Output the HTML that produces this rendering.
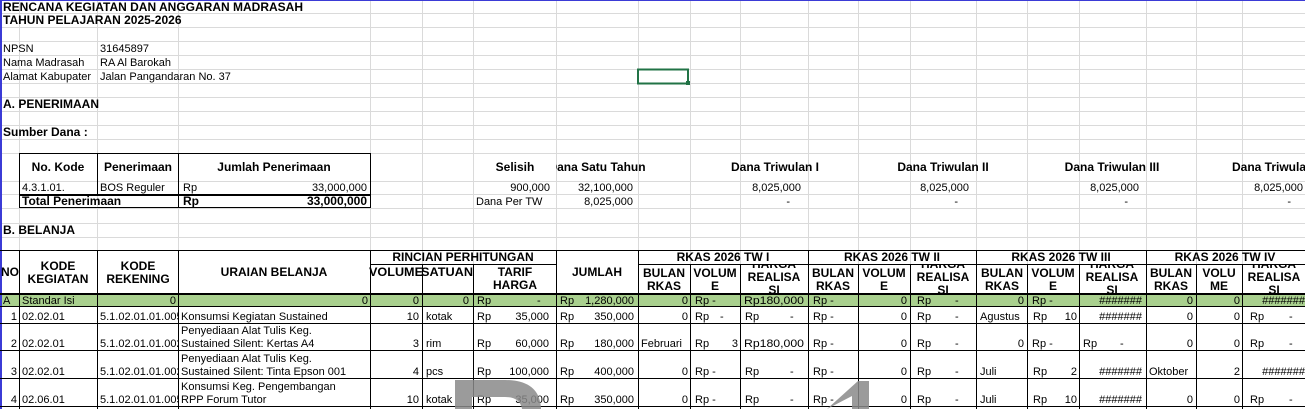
<!DOCTYPE html>
<html><head><meta charset="utf-8"><style>
html,body{margin:0;padding:0;background:#fff;width:1305px;height:409px;overflow:hidden}
svg{display:block}
text{font-family:"Liberation Sans",Arial,sans-serif;font-size:11px;fill:#000}
.b{font-weight:bold;font-size:12px}
.m{text-anchor:middle}
.e{text-anchor:end}
</style></head><body>
<svg width="1305" height="409" viewBox="0 0 1305 409" xmlns="http://www.w3.org/2000/svg">
<defs>
<clipPath id="cNo"><rect x="0" y="250" width="19" height="44"/></clipPath>
<clipPath id="cRek"><rect x="97" y="300" width="81" height="109"/></clipPath>
<clipPath id="cDana"><rect x="556" y="153" width="749" height="28"/></clipPath>
<clipPath id="cHdr"><rect x="0" y="264" width="1305" height="30"/></clipPath>
</defs>
<rect x="0" y="294" width="1305" height="12" fill="#a9d08e"/>
<g stroke="#dadada" stroke-width="1">
<path d="M19.5 0V409M97.5 0V409M178.5 0V409M370.5 0V409M422.5 0V409M473.5 0V409M556.5 0V409M638.5 0V409M690.5 0V409M740.5 0V409M808.5 0V409M858.5 0V409M910.5 0V409M976.5 0V409M1027.5 0V409M1079.5 0V409M1146.5 0V409M1196.5 0V409M1242.5 0V409"/>
<path d="M0 13.5H1305M0 27.5H1305M0 41.5H1305M0 55.5H1305M0 69.5H1305M0 83.5H1305M0 97.5H1305M0 111.5H1305M0 125.5H1305M0 139.5H1305M0 153.5H1305M0 181.5H1305M0 194.5H1305M0 208.5H1305M0 223.5H1305M0 237.5H1305"/>
</g>
<rect x="0" y="0" width="2" height="409" fill="#3b3bd6"/>
<rect x="0" y="0" width="1305" height="1" fill="#3b3bd6"/>
<rect x="638" y="69.5" width="50" height="14" fill="none" stroke="#217346" stroke-width="2"/>
<rect x="686" y="81" width="4" height="4" fill="#217346"/>

<text x="3" y="11" class="b">RENCANA KEGIATAN DAN ANGGARAN MADRASAH</text>
<text x="3" y="24" class="b">TAHUN PELAJARAN 2025-2026</text>
<text x="3" y="52">NPSN</text><text x="100" y="52">31645897</text>
<text x="3" y="66">Nama Madrasah</text><text x="100" y="66">RA Al Barokah</text>
<text x="3" y="80">Alamat Kabupater</text><text x="100" y="80">Jalan Pangandaran No. 37</text>
<text x="3" y="108" class="b">A. PENERIMAAN</text>
<text x="3" y="136" class="b">Sumber Dana :</text>

<g stroke="#000" stroke-width="1" fill="none">
<rect x="19.5" y="153.5" width="351" height="54"/>
<path d="M97.5 153.5V194.5M178.5 153.5V208M19.5 194.5H370.5"/>
<path d="M19.5 195.5H370.5M19.5 207.5H370.5"/>
</g>
<text x="58" y="171" class="b m">No. Kode</text>
<text x="138" y="171" class="b m">Penerimaan</text>
<text x="274" y="171" class="b m">Jumlah Penerimaan</text>
<text x="22" y="191">4.3.1.01.</text><text x="100" y="191">BOS Reguler</text>
<text x="183" y="191">Rp</text><text x="367" y="191" class="e">33,000,000</text>
<text x="22" y="205" class="b">Total Penerimaan</text>
<text x="183" y="205" class="b">Rp</text><text x="367" y="205" class="b e">33,000,000</text>

<text x="515" y="171" class="b m">Selisih</text>
<g clip-path="url(#cDana)"><text x="597" y="171" class="b m">Dana Satu Tahun</text>
<text x="775" y="171" class="b m">Dana Triwulan I</text>
<text x="943" y="171" class="b m">Dana Triwulan II</text>
<text x="1112" y="171" class="b m">Dana Triwulan III</text>
<text x="1280" y="171" class="b m">Dana Triwulan IV</text></g>
<text x="550" y="191" class="e">900,000</text><text x="633" y="191" class="e">32,100,000</text>
<text x="476" y="205">Dana Per TW</text><text x="633" y="205" class="e">8,025,000</text>
<text x="801" y="191" class="e">8,025,000</text><text x="969" y="191" class="e">8,025,000</text>
<text x="1139" y="191" class="e">8,025,000</text><text x="1303" y="191" class="e">8,025,000</text>
<text x="790" y="205" class="e">-</text><text x="958" y="205" class="e">-</text>
<text x="1128" y="205" class="e">-</text><text x="1291" y="205" class="e">-</text>

<text x="3" y="234" class="b">B. BELANJA</text>

<g stroke="#000" stroke-width="1" fill="none">
<path d="M0 250.5H1305M370 264.5H556M638 264.5H1305M0 293.5H1305M0 294.5H1305M0 306.5H1305M0 323.5H1305M0 350.5H1305M0 378.5H1305M0 406.5H1305"/>
<path d="M19.5 250V409M97.5 250V409M178.5 250V409M370.5 250V409M556.5 250V409M638.5 250V409M808.5 250V409M976.5 250V409M1146.5 250V409"/>
<path d="M422.5 264V409M473.5 264V409M690.5 264V409M740.5 264V409M858.5 264V409M910.5 264V409M1027.5 264V409M1079.5 264V409M1196.5 264V409M1242.5 264V409"/>
</g>
<g clip-path="url(#cNo)"><text x="10" y="276" class="b m">NO</text></g>
<text x="58" y="270" class="b m">KODE</text><text x="58" y="283" class="b m">KEGIATAN</text>
<text x="138" y="270" class="b m">KODE</text><text x="138" y="283" class="b m">REKENING</text>
<text x="274" y="276" class="b m">URAIAN BELANJA</text>
<text x="463" y="261" class="b m">RINCIAN PERHITUNGAN</text>
<text x="396" y="276" class="b m" textLength="54" lengthAdjust="spacingAndGlyphs">VOLUME</text>
<text x="447" y="276" class="b m" textLength="52" lengthAdjust="spacingAndGlyphs">SATUAN</text>
<text x="515" y="276" class="b m">TARIF</text><text x="515" y="289" class="b m">HARGA</text>
<text x="597" y="276" class="b m">JUMLAH</text>
<text x="723" y="261" class="b m">RKAS 2026 TW I</text>
<text x="892" y="261" class="b m">RKAS 2026 TW II</text>
<text x="1061" y="261" class="b m">RKAS 2026 TW III</text>
<text x="1225" y="261" class="b m">RKAS 2026 TW IV</text>
<g clip-path="url(#cHdr)">
<text x="664" y="277" class="b m">BULAN</text><text x="664" y="290" class="b m">RKAS</text>
<text x="715" y="277" class="b m">VOLUM</text><text x="715" y="290" class="b m">E</text>
<text x="774" y="268" class="b m">HARGA</text><text x="774" y="281" class="b m">REALISA</text><text x="774" y="294" class="b m">SI</text>
<text x="833" y="277" class="b m">BULAN</text><text x="833" y="290" class="b m">RKAS</text>
<text x="884" y="277" class="b m">VOLUM</text><text x="884" y="290" class="b m">E</text>
<text x="943" y="268" class="b m">HARGA</text><text x="943" y="281" class="b m">REALISA</text><text x="943" y="294" class="b m">SI</text>
<text x="1002" y="277" class="b m">BULAN</text><text x="1002" y="290" class="b m">RKAS</text>
<text x="1053" y="277" class="b m">VOLUM</text><text x="1053" y="290" class="b m">E</text>
<text x="1112" y="268" class="b m">HARGA</text><text x="1112" y="281" class="b m">REALISA</text><text x="1112" y="294" class="b m">SI</text>
<text x="1171" y="277" class="b m">BULAN</text><text x="1171" y="290" class="b m">RKAS</text>
<text x="1219" y="277" class="b m">VOLU</text><text x="1219" y="290" class="b m">ME</text>
<text x="1274" y="268" class="b m">HARGA</text><text x="1274" y="281" class="b m">REALISA</text><text x="1274" y="294" class="b m">SI</text>
</g>

<text x="3" y="304">A</text><text x="22" y="304">Standar Isi</text>
<text x="176" y="304" class="e">0</text><text x="368" y="304" class="e">0</text>
<text x="419" y="304" class="e">0</text><text x="469" y="304" class="e">0</text>
<text x="477" y="304">Rp</text><text x="537" y="304">-</text>
<text x="560" y="304">Rp</text><text x="634" y="304" class="e">1,280,000</text>
<text x="688" y="304" class="e">0</text><text x="695" y="304">Rp  -</text>
<text x="744" y="304" textLength="60" lengthAdjust="spacingAndGlyphs">Rp180,000</text>
<text x="813" y="304">Rp  -</text><text x="907" y="304" class="e">0</text>
<text x="917" y="304">Rp</text><text x="955" y="304">-</text>
<text x="1024" y="304" class="e">0</text><text x="1032" y="304">Rp  -</text>
<text x="1142" y="304" class="e">#######</text>
<text x="1193" y="304" class="e">0</text><text x="1240" y="304" class="e">0</text>
<text x="1305" y="304" class="e">#######</text>

<g clip-path="url(#cRek)">
<text x="100" y="320">5.1.02.01.01.005.</text><text x="100" y="347">5.1.02.01.01.002.</text>
<text x="100" y="375">5.1.02.01.01.002.</text><text x="100" y="403">5.1.02.01.01.005.</text>
</g>
<text x="17" y="320" class="e">1</text><text x="22" y="320">02.02.01</text>
<text x="181" y="320">Konsumsi Kegiatan Sustained</text>
<text x="419" y="320" class="e">10</text><text x="426" y="320">kotak</text>
<text x="477" y="320">Rp</text><text x="549" y="320" class="e">35,000</text>
<text x="560" y="320">Rp</text><text x="634" y="320" class="e">350,000</text>

<text x="17" y="347" class="e">2</text><text x="22" y="347">02.02.01</text>
<text x="181" y="334">Penyediaan Alat Tulis Keg.</text><text x="181" y="347">Sustained Silent: Kertas A4</text>
<text x="419" y="347" class="e">3</text><text x="426" y="347">rim</text>
<text x="477" y="347">Rp</text><text x="549" y="347" class="e">60,000</text>
<text x="560" y="347">Rp</text><text x="634" y="347" class="e">180,000</text>

<text x="17" y="375" class="e">3</text><text x="22" y="375">02.02.01</text>
<text x="181" y="362">Penyediaan Alat Tulis Keg.</text><text x="181" y="375">Sustained Silent: Tinta Epson 001</text>
<text x="419" y="375" class="e">4</text><text x="426" y="375">pcs</text>
<text x="477" y="375">Rp</text><text x="549" y="375" class="e">100,000</text>
<text x="560" y="375">Rp</text><text x="634" y="375" class="e">400,000</text>

<text x="17" y="403" class="e">4</text><text x="22" y="403">02.06.01</text>
<text x="181" y="390">Konsumsi Keg. Pengembangan</text><text x="181" y="403">RPP Forum Tutor</text>
<text x="419" y="403" class="e">10</text><text x="426" y="403">kotak</text>
<text x="477" y="403">Rp</text><text x="549" y="403" class="e">35,000</text>
<text x="560" y="403">Rp</text><text x="634" y="403" class="e">350,000</text>

<text x="688" y="320" class="e">0</text><text x="695" y="320">Rp</text><text x="720" y="320">-</text>
<text x="745" y="320">Rp</text><text x="790" y="320">-</text>
<text x="813" y="320">Rp  -</text><text x="907" y="320" class="e">0</text>
<text x="917" y="320">Rp</text><text x="955" y="320">-</text>
<text x="980" y="320">Agustus</text><text x="1033" y="320">Rp</text><text x="1077" y="320" class="e">10</text>
<text x="1142" y="320" class="e">#######</text>
<text x="1193" y="320" class="e">0</text><text x="1240" y="320" class="e">0</text>
<text x="1250" y="320">Rp</text><text x="1289" y="320">-</text>

<text x="641" y="347">Februari</text><text x="695" y="347">Rp</text><text x="738" y="347" class="e">3</text>
<text x="744" y="347" textLength="60" lengthAdjust="spacingAndGlyphs">Rp180,000</text>
<text x="813" y="347">Rp  -</text><text x="907" y="347" class="e">0</text>
<text x="917" y="347">Rp</text><text x="955" y="347">-</text>
<text x="1024" y="347" class="e">0</text><text x="1032" y="347">Rp  -</text>
<text x="1083" y="347">Rp</text><text x="1120" y="347">-</text>
<text x="1193" y="347" class="e">0</text><text x="1240" y="347" class="e">0</text>
<text x="1250" y="347">Rp</text><text x="1289" y="347">-</text>

<text x="688" y="375" class="e">0</text><text x="695" y="375">Rp  -</text>
<text x="745" y="375">Rp</text><text x="790" y="375">-</text>
<text x="813" y="375">Rp  -</text><text x="907" y="375" class="e">0</text>
<text x="917" y="375">Rp</text><text x="955" y="375">-</text>
<text x="980" y="375">Juli</text><text x="1033" y="375">Rp</text><text x="1077" y="375" class="e">2</text>
<text x="1142" y="375" class="e">#######</text>
<text x="1149" y="375">Oktober</text><text x="1240" y="375" class="e">2</text>
<text x="1305" y="375" class="e">#######</text>

<text x="688" y="403" class="e">0</text><text x="695" y="403">Rp  -</text>
<text x="745" y="403">Rp</text><text x="790" y="403">-</text>
<text x="813" y="403">Rp  -</text><text x="907" y="403" class="e">0</text>
<text x="917" y="403">Rp</text><text x="955" y="403">-</text>
<text x="980" y="403">Juli</text><text x="1033" y="403">Rp</text><text x="1077" y="403" class="e">10</text>
<text x="1142" y="403" class="e">#######</text>
<text x="1193" y="403" class="e">0</text><text x="1240" y="403" class="e">0</text>
<text x="1250" y="403">Rp</text><text x="1289" y="403">-</text>

<path d="M455 380H505Q540 380 541 409H522Q520 397 505 397H472V409H455Z" fill="#8a8a8a" fill-opacity="0.85"/>
<path d="M827 409L858 381H869V409H852V396Z" fill="#8a8a8a" fill-opacity="0.85"/>
</svg>
</body></html>
